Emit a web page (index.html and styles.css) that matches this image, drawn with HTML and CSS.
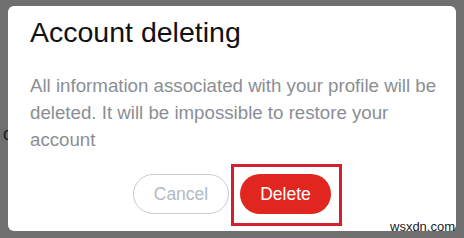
FILE: index.html
```html
<!DOCTYPE html>
<html lang="en">
<head>
  <meta charset="UTF-8">
  <title>Account deleting</title>
  <link rel="stylesheet" href="styles.css">
</head>
<body>

<span class="behind-char">c</span>

<div class="dialog">
  <h1>Account deleting</h1>
  <p class="message">All information associated with your profile will be deleted. It will be impossible to restore your account</p>
  <div class="actions">
    <button class="cancel-btn">Cancel</button>
    <span class="mark">
      <button class="delete-btn">Delete</button>
    </span>
  </div>
</div>

<span class="watermark">wsxdn.com</span>

</body>
</html>
```

FILE: styles.css
```css
body {
  margin: 0;
  width: 464px;
  height: 238px;
  overflow: hidden;
  background: #6f6f6f;
  font-family: 'Liberation Sans', Arial, sans-serif;
  position: relative;
}

.behind-char {
  position: absolute;
  left: 3px;
  top: 124px;
  font-size: 18px;
  color: #1a1a1a;
}

.dialog {
  position: relative;
  margin: 6px 0 0 8px;
  width: 448px;
  height: 225px;
  box-sizing: border-box;
  background: #fff;
  border-radius: 6px;
  padding: 10px 12px 0 22px;
}

h1 {
  margin: 0;
  font-size: 28.5px;
  font-weight: normal;
  color: #111;
  line-height: 32px;
}

.message {
  margin: 24px 0 0 0;
  font-size: 18.7px;
  line-height: 27px;
  color: #8b8e93;
}

.actions {
  display: flex;
  justify-content: center;
  gap: 11px;
  margin: 21px 0 0 -10px;
}

button {
  height: 40px;
  border-radius: 20px;
  font-family: inherit;
  font-size: 17.5px;
  cursor: pointer;
}

.cancel-btn {
  width: 96px;
  background: #fff;
  border: 1px solid #c8cbcf;
  color: #b4bac1;
}

.mark {
  position: relative;
  display: inline-block;
}

.mark::after {
  content: "";
  position: absolute;
  left: -9px;
  right: -11px;
  top: -10px;
  bottom: -12px;
  border: 3px solid #d3202e;
}

.delete-btn {
  width: 91px;
  background: #e1261f;
  border: none;
  color: #fff;
}

.watermark {
  position: absolute;
  left: 390px;
  top: 219px;
  font-size: 13px;
  color: #222;
}
```
